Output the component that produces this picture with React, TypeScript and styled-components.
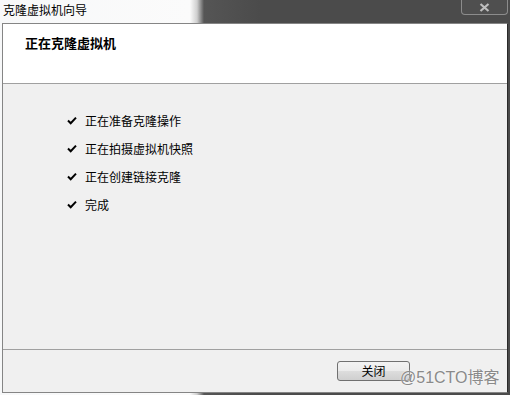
import React from "react";
import styled, { createGlobalStyle } from "styled-components";

const GlobalStyle = createGlobalStyle`
  html, body {
    margin: 0;
    padding: 0;
    background: #4b4b4b;
  }
  body {
    font-family: "Noto Sans CJK SC", "Liberation Sans", sans-serif;
  }
`;

const Window = styled.div`
  position: relative;
  width: 510px;
  height: 395px;
  display: flex;
  flex-direction: column;
  overflow: hidden;
  background: linear-gradient(
    to right,
    #f7f8f9 0px,
    #fbfbfb 190px,
    #cfcfcf 197px,
    #555555 204px,
    #4b4b4b 260px,
    #4b4b4b 100%
  );
`;

const TitleBar = styled.div`
  height: 23px;
  display: flex;
  align-items: flex-start;
  justify-content: space-between;
  flex-shrink: 0;
`;

const TitleText = styled.div`
  font-size: 12px;
  line-height: 14px;
  padding: 3px 0 0 3px;
  color: #000;
`;

const CloseButton = styled.div`
  width: 45px;
  height: 14px;
  margin-right: 2px;
  border: 1px solid #8c8c8c;
  border-top: none;
  border-radius: 0 0 4px 4px;
  display: flex;
  align-items: center;
  justify-content: center;
  background: #4f4f4f;
`;

const Frame = styled.div`
  flex: 1;
  margin: 0 2px 2px 2px;
  border: 1px solid #858585;
  border-right-color: #2a2a2a;
  display: flex;
  flex-direction: column;
  background: #f0f0f0;
`;

const Header = styled.div`
  height: 60px;
  box-sizing: border-box;
  background: #fff;
  border-bottom: 1px solid #a0a0a0;
  padding: 11px 0 0 22px;
`;

const HeaderTitle = styled.div`
  font-size: 13px;
  font-weight: bold;
  line-height: 15px;
  color: #000;
`;

const Body = styled.div`
  flex: 1;
  padding: 22px 0 0 64px;
  border-bottom: 1px solid #a0a0a0;
`;

const Step = styled.div`
  height: 28px;
  display: flex;
  align-items: center;
  gap: 8px;
  font-size: 12px;
  color: #000;
`;

const Footer = styled.div`
  height: 42px;
  display: flex;
  justify-content: flex-end;
  align-items: flex-start;
  padding: 11px 97px 0 0;
  box-sizing: border-box;
`;

const DialogButton = styled.button`
  width: 73px;
  height: 20px;
  padding: 0;
  border: 1px solid #707070;
  border-radius: 3px;
  background: linear-gradient(#f2f2f2 0%, #ebebeb 50%, #dddddd 51%, #cfcfcf 100%);
  font-family: "Noto Sans CJK SC", sans-serif;
  font-size: 12px;
  line-height: 16px;
  color: #000;
`;

const Watermark = styled.div`
  position: absolute;
  left: 400px;
  top: 364px;
  font-family: "Liberation Sans", "Noto Sans CJK SC", sans-serif;
  font-size: 16px;
  color: #8a8a8a;
  text-shadow: 0 0 2px #fff;
`;

const Check = () => (
  <svg width="10" height="9" viewBox="0 0 10 9">
    <path d="M1 4.5 L3.7 7.2 L9 1.6" stroke="#000" strokeWidth="2" fill="none" />
  </svg>
);

const steps = ["正在准备克隆操作", "正在拍摄虚拟机快照", "正在创建链接克隆", "完成"];

export default function App() {
  return (
    <>
      <GlobalStyle />
      <Window>
        <TitleBar>
          <TitleText>克隆虚拟机向导</TitleText>
          <CloseButton>
            <svg width="11" height="9" viewBox="0 0 11 9">
              <path d="M1.5 1 L9.5 8 M9.5 1 L1.5 8" stroke="#bdbdbd" strokeWidth="2.2" />
            </svg>
          </CloseButton>
        </TitleBar>
        <Frame>
          <Header>
            <HeaderTitle>正在克隆虚拟机</HeaderTitle>
          </Header>
          <Body>
            {steps.map((s) => (
              <Step key={s}>
                <Check />
                <span>{s}</span>
              </Step>
            ))}
          </Body>
          <Footer>
            <DialogButton>关闭</DialogButton>
          </Footer>
        </Frame>
        <Watermark>@51CTO博客</Watermark>
      </Window>
    </>
  );
}
